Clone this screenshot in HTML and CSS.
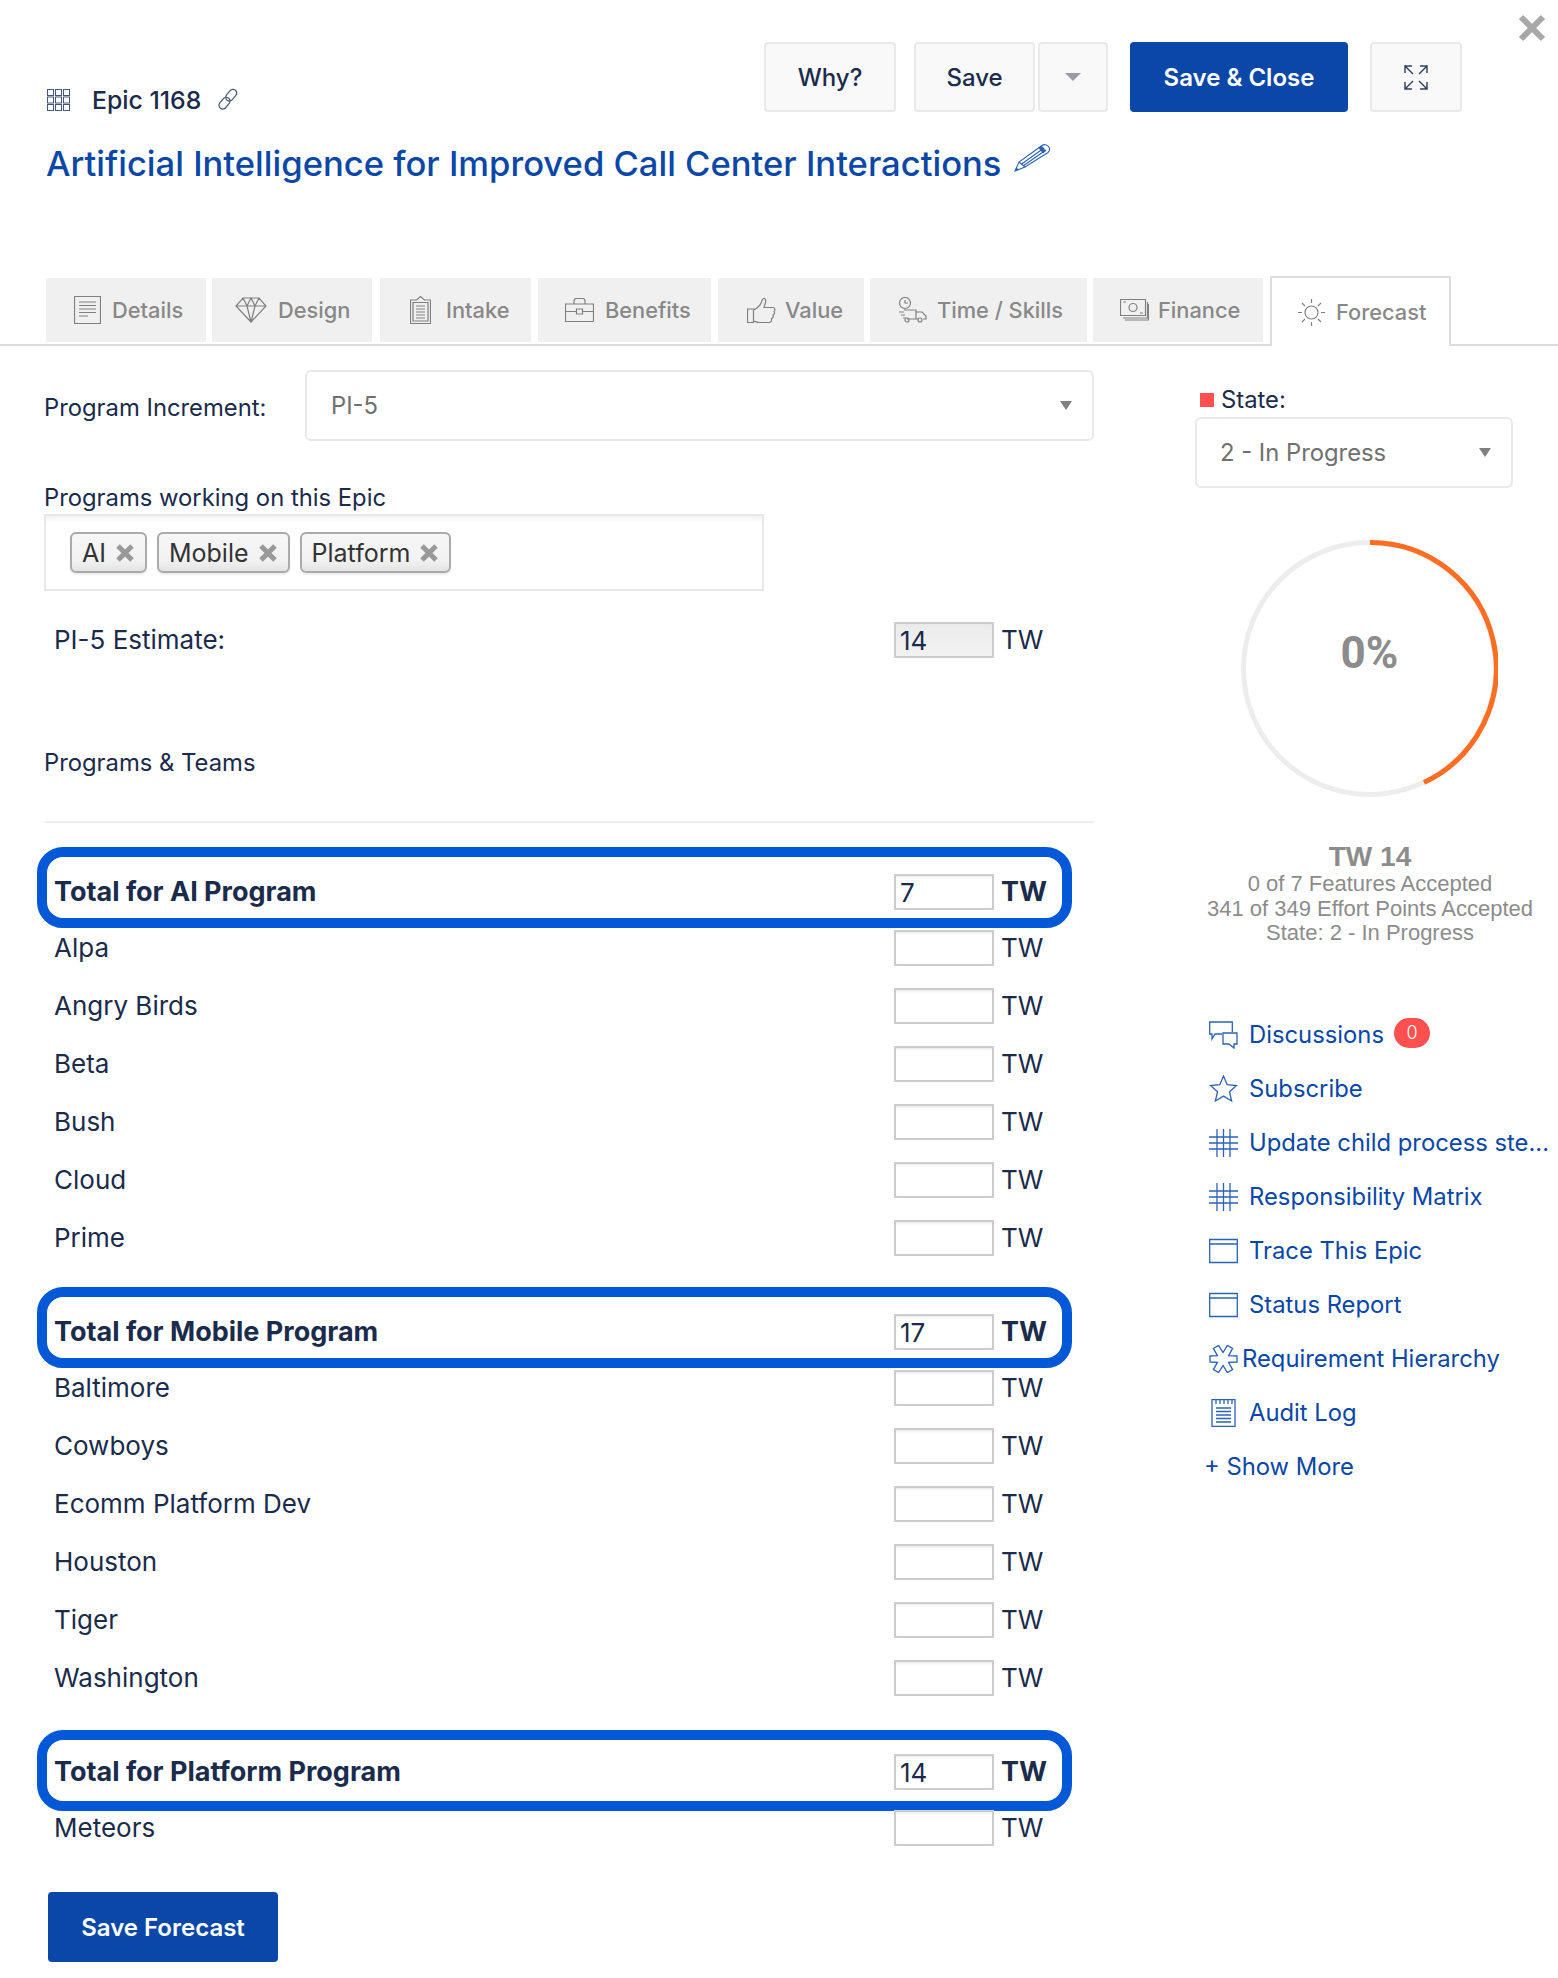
FILE: index.html
```html
<!DOCTYPE html>
<html lang="en">
<head>
<meta charset="utf-8">
<title>Epic 1168</title>
<link rel="stylesheet" href="styles.css">
</head>
<body>
<div class="page">
  <svg class="close" viewBox="0 0 28 28"><path d="M3 3l22 22M25 3L3 25"/></svg>
  <header class="head">
    <div class="head-top">
      <div class="epic">
        <svg class="epic-icon" viewBox="0 0 24 22"><g><rect x=".5" y=".5" width="6" height="6"/><rect x="8.5" y=".5" width="6" height="6"/><rect x="16.5" y=".5" width="6" height="6"/><rect x=".5" y="8" width="6" height="6"/><rect x="8.5" y="8" width="6" height="6"/><rect x="16.5" y="8" width="6" height="6"/><rect x=".5" y="15.5" width="6" height="6"/><rect x="8.5" y="15.5" width="6" height="6"/><rect x="16.5" y="15.5" width="6" height="6"/></g></svg>
        <span class="epic-name">Epic 1168</span>
        <svg class="link-icon" viewBox="0 0 24 24"><rect x="-3.500" y="-3" width="13" height="7.500" rx="3.700" transform="translate(7 17) rotate(-50)"/><rect x="-6.500" y="-3.500" width="13" height="7.500" rx="3.700" transform="translate(16 7) rotate(-50)"/></svg>
      </div>
      <div class="actions">
        <button class="btn btn-why">Why?</button>
        <div class="split">
          <button class="btn btn-save">Save</button>
          <button class="btn btn-caret"><svg class="caret" viewBox="0 0 16 8"><path d="M0 0h16L8 8z"/></svg></button>
        </div>
        <button class="btn btn-primary btn-close">Save &amp; Close</button>
        <button class="btn btn-expand"><svg class="expand" viewBox="0 0 24 25"><path d="M1 8V1h7M1 1l8 8M16 1h7v7M23 1l-8 8M1 17v7h7M1 24l8-8M23 17v7h-7M23 24l-8-8"/></svg></button>
      </div>
    </div>
    <h1 class="title"><span>Artificial Intelligence for Improved Call Center Interactions</span>
      <svg class="pencil" viewBox="0 0 36 29"><path class="pencil-line" d="M1 28l4-9L28 2.500c2-1.500 5-1 6.500 1s1 4.500-.5 6L11 24zM5 19l6 5M7 21.500L30 5M9 23L32 7"/><path class="pencil-band" d="M24.500 5l3-2.500 4.500 5.500-3 2.500z"/><path class="pencil-band" d="M1 28l1.200-3.500 2.800 2z"/></svg>
    </h1>
  </header>

  <nav class="tabs">
    <a class="tab t-details"><svg class="ti" width="27" height="28" viewBox="0 0 27 28"><path d="M.5.5h26v27H.5zM5 6h17M5 9.500h17M5 13h17M5 16.500h17M5 20h9"/></svg>Details</a>
    <a class="tab t-design"><svg class="ti" width="32" height="26" viewBox="0 0 32 26"><path d="M8 1h16l7 8-15 16L1 9zM1 9h30M8 1l4 8 4 16 4-16 4-8M12 9l4-8 4 8"/></svg>Design</a>
    <a class="tab t-intake"><svg class="ti" width="21" height="28" viewBox="0 0 21 28"><path d="M.5 4h6l4-3.500 4 3.500h6v23.500H.5zM3 6.500h15v18.500H3zM6 10h9M6 13h9M6 16h9M6 19h9M6 22h9"/></svg>Intake</a>
    <a class="tab t-benefits"><svg class="ti" width="29" height="24" viewBox="0 0 29 24"><path d="M.5 6h28v17.500H.5zM.5 13.500h11M17.500 13.500h11M11.500 11h6v5h-6zM9 6V3c0-1.500 1-2.500 2.500-2.500h6C19 .5 20 1.500 20 3v3"/></svg>Benefits</a>
    <a class="tab t-value"><svg class="ti" width="29" height="25" viewBox="0 0 29 25"><path d="M.5 11h6v13.500h-6zM6.500 12c4-2 7-5 8-8 .5-2 1-3.500 2.500-3.500s2 2 1.500 4L17 9.500h9c2 0 2.500 3 1 4 1 1.500.5 3-1 3.500.5 1.500 0 3-1.500 3.500.5 2-.5 4-2.500 4H12c-2 0-3.500-1-5.500-1.500"/></svg>Value</a>
    <a class="tab t-time"><svg class="ti" width="29" height="26" viewBox="0 0 29 26"><circle cx="7" cy="6" r="5.500"/><path d="M7 3v3h3M6 13h12v9H9M18 15h6l4 4v3h-3M18 22h2M1 15h5M3 18h4M5 21h3"/><circle cx="9" cy="23" r="2"/><circle cx="22" cy="23" r="2"/></svg>Time / Skills</a>
    <a class="tab t-finance"><svg class="ti" width="29" height="22" viewBox="0 0 29 22"><path d="M.5.5h25v16H.5z"/><circle cx="13" cy="8.500" r="4"/><path d="M3 3h3M20 14h3M27.500 3v16H3M28.500 5v16H5"/></svg>Finance</a>
    <a class="tab tab-active t-forecast"><svg class="ti" width="27" height="27" viewBox="0 0 27 27"><circle cx="13.500" cy="13.500" r="6.500"/><path d="M13.500 0v4M13.500 23v4M0 13.500h4M23 13.500h4M4 4l3 3M20 20l3 3M23 4l-3 3M7 20l-3 3"/></svg>Forecast</a>
  </nav>

  <div class="body">
    <main class="main">
      <div class="pi-row">
        <label class="pi-label">Program Increment:</label>
        <div class="select select-pi"><span>PI-5</span><svg class="sel-caret" viewBox="0 0 12 9"><path d="M0 0h12L6 9z"/></svg></div>
      </div>
      <div class="prog-label">Programs working on this Epic</div>
      <div class="chips">
        <span class="chip">AI<svg class="chip-x" viewBox="0 0 22 22"><path d="M4 4l14 14M18 4L4 18"/></svg></span>
        <span class="chip">Mobile<svg class="chip-x" viewBox="0 0 22 22"><path d="M4 4l14 14M18 4L4 18"/></svg></span>
        <span class="chip">Platform<svg class="chip-x" viewBox="0 0 22 22"><path d="M4 4l14 14M18 4L4 18"/></svg></span>
      </div>
      <div class="row estimate"><span class="name">PI-5 Estimate:</span><input class="num num-filled" value="14"><span class="unit">TW</span></div>
      <div class="section-title">Programs &amp; Teams</div>
      <hr class="rule">

      <section class="group">
        <div class="row total"><span class="hl hl-ai"></span><span class="name">Total for AI Program</span><input class="num" value="7"><span class="unit">TW</span></div>
        <div class="row"><span class="name">Alpa</span><input class="num"><span class="unit">TW</span></div>
        <div class="row"><span class="name">Angry Birds</span><input class="num"><span class="unit">TW</span></div>
        <div class="row"><span class="name">Beta</span><input class="num"><span class="unit">TW</span></div>
        <div class="row"><span class="name">Bush</span><input class="num"><span class="unit">TW</span></div>
        <div class="row"><span class="name">Cloud</span><input class="num"><span class="unit">TW</span></div>
        <div class="row"><span class="name">Prime</span><input class="num"><span class="unit">TW</span></div>
      </section>
      <section class="group">
        <div class="row total"><span class="hl hl-mobile"></span><span class="name">Total for Mobile Program</span><input class="num" value="17"><span class="unit">TW</span></div>
        <div class="row"><span class="name">Baltimore</span><input class="num"><span class="unit">TW</span></div>
        <div class="row"><span class="name">Cowboys</span><input class="num"><span class="unit">TW</span></div>
        <div class="row"><span class="name">Ecomm Platform Dev</span><input class="num"><span class="unit">TW</span></div>
        <div class="row"><span class="name">Houston</span><input class="num"><span class="unit">TW</span></div>
        <div class="row"><span class="name">Tiger</span><input class="num"><span class="unit">TW</span></div>
        <div class="row"><span class="name">Washington</span><input class="num"><span class="unit">TW</span></div>
      </section>
      <section class="group group-last">
        <div class="row total"><span class="hl hl-platform"></span><span class="name">Total for Platform Program</span><input class="num" value="14"><span class="unit">TW</span></div>
        <div class="row"><span class="name">Meteors</span><input class="num"><span class="unit">TW</span></div>
      </section>
      <button class="btn btn-primary btn-forecast">Save Forecast</button>
    </main>

    <aside class="side">
      <div class="state-label"><span class="state-dot"></span>State:</div>
      <div class="select select-state"><span>2 - In Progress</span><svg class="sel-caret" viewBox="0 0 12 9"><path d="M0 0h12L6 9z"/></svg></div>
      <div class="ring">
        <svg class="ring-svg" viewBox="0 0 257 257"><circle class="ring-bg" cx="128.500" cy="128.500" r="126"/><path class="ring-fg" d="M129 2.500A126 126 0 0 1 183 242.500"/></svg>
        <div class="ring-text">0%</div>
      </div>
      <div class="stats">
        <div class="stats-head">TW 14</div>
        <div>0 of 7 Features Accepted</div>
        <div>341 of 349 Effort Points Accepted</div>
        <div>State: 2 - In Progress</div>
      </div>
      <ul class="links">
        <li class="link"><svg class="li" viewBox="0 0 29 28"><path d="M13 13H6l-3 5v-5H.7V1h22.600v10M14 12h14v11h-3v4l-5-4h-6z"/></svg>Discussions<span class="badge">0</span></li>
        <li class="link"><svg class="li" viewBox="0 0 29 28"><path d="M14.500 1l3.700 8.700 9.300.8-7 6.200 2.100 9.300-8.100-4.900-8.100 4.900 2.100-9.300-7-6.200 9.300-.8z"/></svg>Subscribe</li>
        <li class="link"><svg class="li" viewBox="0 0 29 28"><path d="M8 0v28M14.500 0v28M21 0v28M0 8h29M0 14h29M0 20h29"/></svg>Update child process ste...</li>
        <li class="link"><svg class="li" viewBox="0 0 29 28"><path d="M8 0v28M14.500 0v28M21 0v28M0 8h29M0 14h29M0 20h29"/></svg>Responsibility Matrix</li>
        <li class="link"><svg class="li" viewBox="0 0 29 28"><path d="M.7 2.500h27.600v23H.7zM.7 7h27.600"/></svg>Trace This Epic</li>
        <li class="link"><svg class="li" viewBox="0 0 29 28"><path d="M.7 2.500h27.600v23H.7zM.7 7h27.600"/></svg>Status Report</li>
        <li class="link link-tight"><svg class="li" viewBox="0 0 29 28"><path d="M28 11v6l-8.400.25 4 7.350-5.200 3-4.400-7.100-4.400 7.100-5.200-3 4-7.350L1 17v-6l7.400-.25-4-7.350 5.200-3 4.400 7.100 4.400-7.100 5.200 3-4 7.350z"/></svg>Requirement Hierarchy</li>
        <li class="link"><svg class="li" viewBox="0 0 29 28"><path d="M3 .7h23v26.600H3zM7 1v4M11 1v4M15 1v4M19 1v4M23 1v4M7 9h15M7 12.500h15M7 16h15M7 19.500h15M7 23h15"/></svg>Audit Log</li>
        <li class="link link-more">+ Show More</li>
      </ul>
    </aside>
  </div>
</div>
</body>
</html>
```

FILE: styles.css
```css
* { box-sizing: border-box; }
html, body { margin: 0; padding: 0; background: #fff; }
body { font-family: Inter, "Noto Sans", "Liberation Sans", sans-serif; font-size: 23.8px; line-height: 30px; color: #1a2b4b; }
.page { position: relative; width: 1558px; height: 1978px; overflow: hidden; }

.close { position: absolute; left: 1518px; top: 14px; width: 28px; height: 28px; }
.close path { fill: none; stroke: #a8a8a8; stroke-width: 6; }

.head { padding: 42px 96px 0 46px; }
.head-top { display: flex; justify-content: space-between; align-items: flex-start; }
.epic { display: flex; align-items: center; height: 30px; margin-top: 43px; }
.epic-icon { width: 24px; height: 22px; margin: 0 21px 0 1px; }
.epic-icon rect { fill: none; stroke: #45577a; stroke-width: 1; }
.epic-name { font-size: 24.800px; font-weight: 500; }
.link-icon { width: 24px; height: 24px; margin-left: 14px; }
.link-icon rect { fill: none; stroke: #45577a; stroke-width: 1.2; }
.actions { display: flex; }
.btn { font-family: inherit; font-size: 24px; font-weight: 500; color: #1a2b4b; height: 70px; padding: 0; background: #f9f9f9; border: 2px solid #e9e9e9; border-radius: 4px; }
.btn-why { width: 132px; margin-right: 18px; }
.split { display: flex; gap: 3px; margin-right: 22px; }
.btn-save { width: 121px; }
.btn-caret { width: 70px; display: flex; align-items: center; justify-content: center; }
.caret { width: 16px; height: 8px; fill: #999ba8; }
.btn-primary { background: #0a47a6; border-color: #0a47a6; color: #fff; font-weight: 600; }
.btn-close { width: 218px; margin-right: 22px; }
.btn-expand { width: 92px; display: flex; align-items: center; justify-content: center; }
.expand { width: 24px; height: 25px; }
.expand path { fill: none; stroke: #2f3f5f; stroke-width: 1.4; }

.title { display: flex; align-items: flex-start; margin: 26px 0 0; font-size: 34.600px; line-height: 44px; font-weight: 500; color: #0a47a6; white-space: nowrap; }
.pencil { width: 36px; height: 29px; margin: 2px 0 0 12px; flex: none; }
.pencil-line { fill: none; stroke: #2b62b5; stroke-width: 1.1; }
.pencil-band { fill: #2b62b5; }

.tabs { display: flex; align-items: flex-end; height: 68px; margin-top: 93px; padding: 0 0 2px 46px; border-bottom: 2px solid #ddd; }
.tab { display: flex; align-items: center; height: 64px; background: #f0f0f0; color: #888; font-size: 21.800px; font-weight: 500; white-space: nowrap; }
.ti { flex: none; fill: none; stroke: #808080; stroke-width: 1.2; margin-right: 11px; }
.t-details { width: 160px; padding-left: 28px; }
.t-design { width: 160px; margin-left: 6px; padding-left: 23px; }
.t-intake { width: 151px; margin-left: 8px; padding-left: 30px; }
.t-intake .ti { margin-right: 15px; }
.t-benefits { width: 173px; margin-left: 7px; padding-left: 27px; }
.t-value { width: 146px; margin-left: 7px; padding-left: 29px; }
.t-value .ti { margin-right: 9px; }
.t-time { width: 217px; margin-left: 6px; padding-left: 28px; }
.t-time .ti { margin-right: 10px; }
.t-finance { width: 170px; margin-left: 6px; padding-left: 27px; }
.t-finance .ti { margin-right: 9px; }
.tab-active { background: #fff; border: 2px solid #ddd; border-bottom: 0; height: 70px; margin-bottom: -4px; position: relative; }
.t-forecast { width: 181px; margin-left: 7px; padding-left: 26px; }
.t-forecast .ti { margin-right: 11px; }

.body { display: flex; }
.main { width: 1050px; margin-left: 44px; padding-top: 24px; flex: none; }
.pi-row { display: flex; align-items: center; justify-content: space-between; height: 71px; }
.pi-label { padding-top: 4px; }
.select { display: flex; align-items: center; justify-content: space-between; border: 2px solid #e9e9e9; border-radius: 6px; height: 71px; color: #707070; background: #fff; }
.select-pi { width: 789px; padding: 0 20px 0 24px; }
.sel-caret { width: 12px; height: 9px; fill: #808080; }
.prog-label { margin-top: 42px; height: 30px; }
.chips { display: flex; align-items: center; gap: 10px; height: 77px; margin-top: 1px; padding: 0 0 0 24px; width: 720px; border: 2px solid #e8e8e8; box-shadow: inset 0 6px 6px -4px #eee; }
.chip { display: flex; align-items: center; height: 41px; padding: 0 9px 0 10px; border: 2px solid #aaa; border-radius: 6px; font-size: 25px; color: #333; background: linear-gradient(#f6f6f6, #f2f2f2 70%, #e4e4e4); box-shadow: 0 2px 2px #eee; }
.chip-x { width: 22px; height: 22px; margin-left: 8px; }
.chip-x path { fill: none; stroke: #999; stroke-width: 5; }

.row { position: relative; display: flex; align-items: center; height: 58px; padding: 0 48px 0 10px; font-size: 26px; }
.name { flex: 1; }
.num { width: 100px; height: 36px; margin: 0 7px 0 0; padding: 0 4px; border: 2px solid #ccc; border-radius: 0; box-shadow: inset 0 3px 3px -2px #e6e6e6; font-family: inherit; font-size: 26px; color: #1a2b4b; background: #fff; outline: 0; }
.num-filled { background: linear-gradient(#ececec, #f2f2f2); }
.unit { width: 45px; }
.estimate { margin-top: 20px; }
.section-title { margin-top: 79px; height: 30px; }
.rule { height: 2px; margin: 43px 0 40px; border: 0; background: #eee; }
.group { margin-bottom: 36px; }
.row.total { height: 56px; padding-top: 2px; }
.total .name, .total .unit { font-weight: 700; font-size: 27px; position: relative; }
.total .num { position: relative; }
.hl { position: absolute; left: -7px; right: 22px; border: 10px solid #0358d8; border-radius: 26px; }
.hl-ai, .hl-mobile { top: -16px; bottom: -9px; }
.hl-platform { top: -13px; bottom: -12px; }
.group-last { margin-bottom: 35px; }
.btn-forecast { width: 230px; margin-left: 4px; }

.side { width: 363px; margin-left: 101px; flex: none; padding-top: 39px; }
.state-label { display: flex; align-items: center; height: 30px; padding-left: 5px; }
.state-dot { width: 14px; height: 14px; margin-right: 7px; background: #ff5050; }
.select-state { width: 318px; margin-top: 2px; padding: 0 20px 0 23px; }
.ring { display: grid; width: 257px; height: 257px; margin: 52px 0 0 46px; }
.ring-svg, .ring-text { grid-area: 1 / 1; }
.ring-svg { width: 257px; height: 257px; }
.ring-bg { fill: none; stroke: #ededed; stroke-width: 5; }
.ring-fg { fill: none; stroke: #ff6d22; stroke-width: 5; }
.ring-text { align-self: center; justify-self: center; margin-bottom: 31px; font-family: Roboto, sans-serif; font-size: 44px; line-height: 48px; font-weight: 700; color: #8c8c8c; }
.stats { width: 350px; margin-top: 45px; text-align: center; font-family: "Liberation Sans", Arial, sans-serif; font-size: 22px; line-height: 24.500px; color: #8c8c8c; }
.stats-head { font-size: 28px; line-height: 30px; font-weight: 700; }
.links { list-style: none; margin: 62px 0 0; padding: 0 0 0 14px; }
.link { display: flex; align-items: center; height: 54px; color: #0a47a6; white-space: nowrap; }
.li { flex: none; width: 29px; height: 28px; margin-right: 11px; fill: none; stroke: #2b62b5; stroke-width: 1.300; }
.link-tight .li { margin-right: 4px; }
.link-more { margin-left: -5px; }
.badge { display: flex; align-items: center; justify-content: center; width: 36px; height: 30px; margin: -4px 0 0 10px; border-radius: 15px; background: #ff5050; color: #fff; font-size: 18px; font-weight: 300; }
```
